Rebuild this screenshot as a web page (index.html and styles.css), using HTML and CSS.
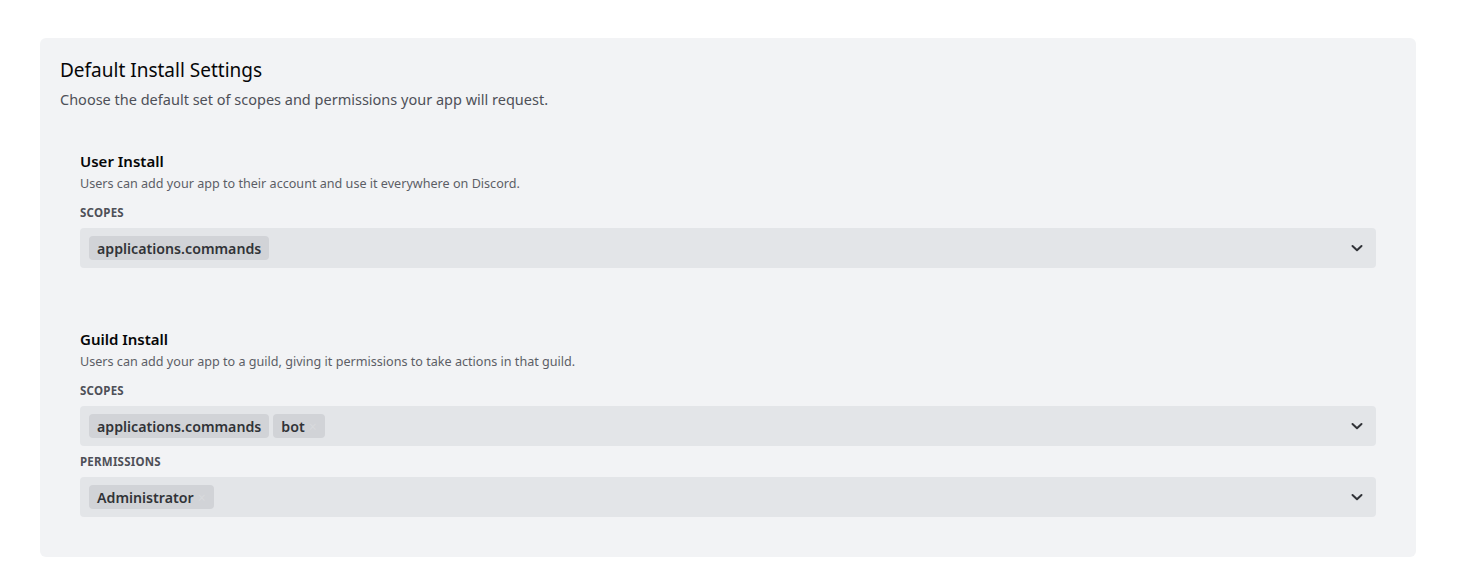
FILE: index.html
```html
<!DOCTYPE html>
<html lang="en">
<head>
<meta charset="utf-8">
<title>Default Install Settings</title>
<link rel="stylesheet" href="styles.css">
</head>
<body>
<div class="page">
  <section class="card">
    <header class="card-head">
      <h2 class="card-title">Default Install Settings</h2>
      <p class="card-sub">Choose the default set of scopes and permissions your app will request.</p>
    </header>

    <div class="install">
      <h3 class="install-title">User Install</h3>
      <p class="install-desc">Users can add your app to their account and use it everywhere on Discord.</p>
      <div class="field-label">Scopes</div>
      <div class="select">
        <div class="tags">
          <span class="tag">applications.commands</span>
        </div>
        <svg class="chev" width="16" height="16" viewBox="0 0 16 16"><path d="M3.5 6 L8 10.2 L12.5 6" fill="none" stroke="#313338" stroke-width="2" stroke-linecap="round" stroke-linejoin="round"/></svg>
      </div>
    </div>

    <div class="install">
      <h3 class="install-title">Guild Install</h3>
      <p class="install-desc">Users can add your app to a guild, giving it permissions to take actions in that guild.</p>
      <div class="field-label">Scopes</div>
      <div class="select">
        <div class="tags">
          <span class="tag">applications.commands</span>
          <span class="tag removable">bot<span class="x">×</span></span>
        </div>
        <svg class="chev" width="16" height="16" viewBox="0 0 16 16"><path d="M3.5 6 L8 10.2 L12.5 6" fill="none" stroke="#313338" stroke-width="2" stroke-linecap="round" stroke-linejoin="round"/></svg>
      </div>
      <div class="field-label">Permissions</div>
      <div class="select">
        <div class="tags">
          <span class="tag removable">Administrator<span class="x">×</span></span>
        </div>
        <svg class="chev" width="16" height="16" viewBox="0 0 16 16"><path d="M3.5 6 L8 10.2 L12.5 6" fill="none" stroke="#313338" stroke-width="2" stroke-linecap="round" stroke-linejoin="round"/></svg>
      </div>
    </div>
  </section>
</div>
</body>
</html>
```

FILE: styles.css
```css
* { box-sizing: border-box; }
html, body {
  margin: 0;
  padding: 0;
  background: #ffffff;
  font-family: "Noto Sans", "Open Sans", sans-serif;
  color: #313338;
}
.page {
  padding: 38px 44px 0 40px;
}
.card {
  background: #f2f3f5;
  border-radius: 6px;
  padding: 20px;
  display: flex;
  flex-direction: column;
  gap: 20px;
}
.card-head {
  display: flex;
  flex-direction: column;
  gap: 7px;
  margin-bottom: 1px;
}
.card-title {
  margin: 0;
  font-size: 19px;
  line-height: 24px;
  font-weight: 400;
  color: #060607;
}
.card-sub {
  margin: 0;
  font-size: 14.5px;
  line-height: 20px;
  color: #4e5058;
}
.install {
  padding: 20px;
  display: flex;
  flex-direction: column;
}
.install-title {
  margin: 0;
  font-size: 15px;
  line-height: 22px;
  font-weight: 600;
  color: #060607;
}
.install-desc {
  margin: 4px 0 0;
  font-size: 12.6px;
  line-height: 16px;
  color: #5c5e66;
}
.field-label {
  margin-top: 13px;
  font-size: 11.5px;
  line-height: 16px;
  font-weight: 700;
  text-transform: uppercase;
  letter-spacing: 0.02em;
  color: #4e5058;
}
.select + .field-label { margin-top: 8px; }
.select {
  margin-top: 7px;
  height: 40px;
  background: #e3e5e8;
  border-radius: 4px;
  display: flex;
  align-items: center;
  justify-content: space-between;
  padding: 0 11px 0 9px;
}
.tags {
  display: flex;
  gap: 4px;
}
.tag {
  display: inline-flex;
  align-items: center;
  height: 24px;
  padding: 0 8px;
  border-radius: 4px;
  background: #d1d3d7;
  font-size: 14.2px;
  font-weight: 600;
  color: #313338;
}
.tag.removable { padding-right: 6px; }
.x {
  margin-left: 2px;
  width: 12px;
  font-size: 14px;
  font-weight: 400;
  color: #d8dadd;
  text-align: center;
}
.chev { display: block; }
```
